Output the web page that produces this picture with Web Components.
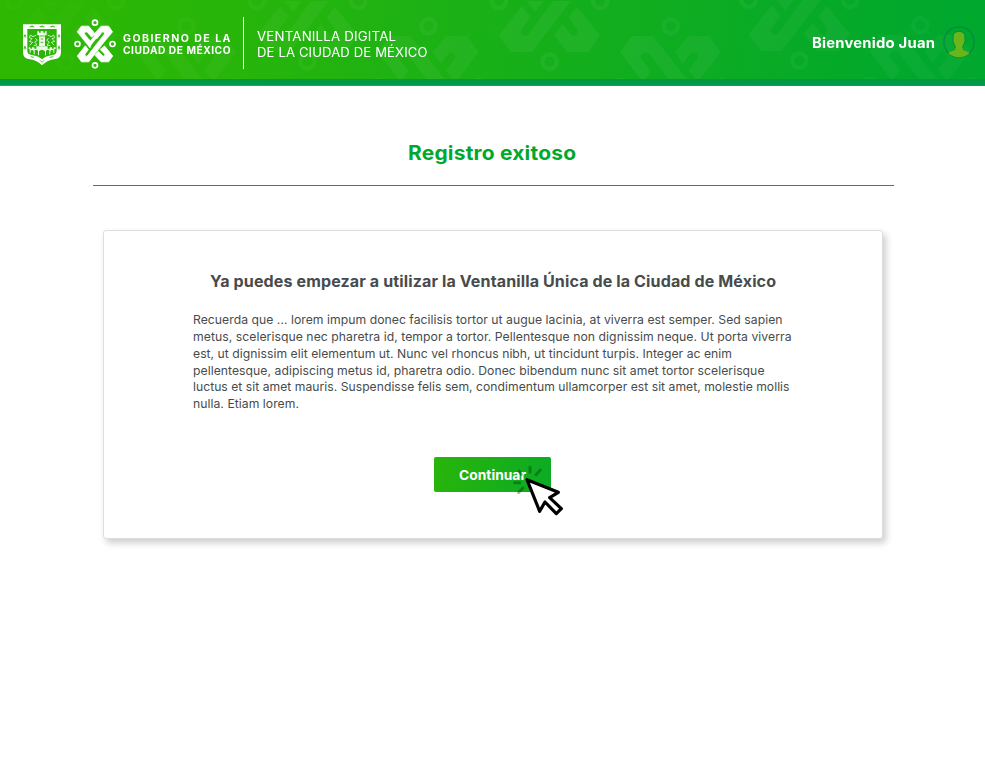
<!DOCTYPE html>
<html lang="es">
<head>
<meta charset="utf-8">
<title>Registro exitoso</title>
<style>
body{margin:0;background:#fff;font-family:Inter,"Open Sans",sans-serif;color:#484b4b}
</style>
</head>
<body>
<app-page></app-page>
<script>
const define = (name, html, ready) => customElements.define(name, class extends HTMLElement {
  connectedCallback() {
    if (this.shadowRoot) return;
    this.attachShadow({mode: 'open'}).innerHTML = html;
    if (ready) ready(this);
  }
});

/* Fills a width with one line: part tracking, part glyph widening. */
const fit = (span, target, n, share = .3) => {
  const natural = span.getBoundingClientRect().width;
  const spacing = (target - natural) * share / n;
  span.style.letterSpacing = spacing + 'px';
  span.style.transform = `scaleX(${target / (natural + spacing * (n - 1))})`;
};

define('fit-line', `<style>:host{display:block;white-space:nowrap}span{display:inline-block;transform-origin:0 50%}</style><span><slot></slot></span>`, el => {
  if (el.hasAttribute('later')) return;
  const w = +el.getAttribute('w');
  fit(el.shadowRoot.querySelector('span'), w, el.textContent.length, +(el.getAttribute('track') || .3));
  el.style.width = w + 'px';
});

define('header-pattern', `<style>:host{display:block;position:absolute;inset:0 0 7px 0;overflow:hidden}svg{display:block}</style>
<svg width="985" height="79" fill="#fff">
<defs>
<linearGradient id="fade"><stop offset="0" stop-color="#fff" stop-opacity=".35"/><stop offset=".35" stop-color="#fff" stop-opacity=".9"/><stop offset=".6" stop-color="#fff"/><stop offset="1" stop-color="#fff" stop-opacity=".75"/></linearGradient>
<mask id="m" maskUnits="userSpaceOnUse" x="0" y="0" width="985" height="79"><rect width="985" height="79" fill="url(#fade)"/></mask>
<circle id="ring" r="21.5" fill="none" stroke="#fff" stroke-width="13"/>
<g id="a">
<path d="M-152-104L-117-153H-54L52-20H-4L-62-96Q-76-112-88-98Q-94-90-88-84L-60-48L-80-20H-88Z"/>
<path d="M13-104L53-153H116L150-104L86-20H76L53-51L80-84Q84-96 75-102Q65-108 58-98L36-69Z"/>
<use href="#ring" y="-182"/><use href="#ring" x="-152"/><use href="#ring" x="152"/></g>
<g id="b">
<path d="M-152 103L-83 15L-57 47L-85 86Q-90 98-80 103Q-70 108-62 98L10 0H64L-53 153H-116Z"/>
<path d="M82 17L152 103L117 153H52L14 101L40 69L63 99Q72 108 81 101Q87 94 83 86L57 49Z"/>
<path d="M-68 0H-18L-43 32Z"/>
<use href="#ring" y="182"/><use href="#ring" x="-152"/><use href="#ring" x="152"/></g>
</defs>
<g mask="url(#m)"><g id="set" opacity=".052"></g></g>
</svg>`, el => {
  el.shadowRoot.querySelector('#set').innerHTML =
    [[186.3,87],[428.5,87],[670.7,87],[920.3,86]].map(([x,y]) => `<use href="#a" transform="translate(${x} ${y}) scale(.3333)"/>`).join('') +
    [[65.3,1],[307.5,1],[549.5,1],[799.3,0]].map(([x,y]) => `<use href="#b" transform="translate(${x} ${y}) scale(.3333)"/>`).join('');
});

define('city-shield', `<style>:host{display:block;width:38px;height:42px}svg{display:block}</style>
<svg width="38" height="42" viewBox="0 0 114 126">
<path fill="#fff" d="M0 1H114V84Q114 102 98 105Q72 108 57 124Q42 108 16 105Q0 102 0 84Z"/>
<path fill="#2cb508" d="M13 15H101V80Q101 91 88 93Q68 96 57 106Q46 96 27 93Q13 91 13 80Z"/>
<g fill="#fff" fill-opacity=".92"><path d="M43 22H48V26H53V21H61V26H66V22H71V34H66V66H48V34H43Z"/>
<path d="M17 70H22V74H27V70H34V74H40V67H74V74H80V70H87V74H92V70H98V75H94V86H91V79Q85 76 82 81V91H79V79Q73 74 69 81V94H66V82Q57 72 48 82V94H45V81Q41 74 35 79V91H32V81Q29 76 23 79V86H20V75H17Z"/></g>
<g fill="none" stroke="#fff" stroke-opacity=".85" stroke-width="2.6"><path d="M40 33L30 38L22 33L19 41L27 44L19 52L29 55L20 64M37 42L43 49L35 54L42 63L32 65M74 33L84 38L92 33L95 41L87 44L95 52L85 55L94 64M77 42L71 49L79 54L72 63L82 65"/></g>
<g stroke="#2cb508" stroke-width="2.5" fill="none"><path d="M49 36H65M53 45H61M53 55H61M20 8H33M22 10L27 5L32 10M50 8H64M52 10L57 5L62 10M82 8H95M84 10L89 5L94 10M6 31V41M3 38L6 33L9 38M6 65V77M3 74L6 68L9 74M108 31V41M105 38L108 33L111 38M108 65V77M105 74L108 68L111 74M23 98L33 100M80 100L91 98M51 109L57 115L63 109"/></g>
</svg>`);

define('city-emblem', `<style>:host{display:block;width:44px;height:50px}svg{display:block}</style>
<svg width="44" height="50" viewBox="0 0 132 150">
<g fill="none" stroke="#fff" stroke-width="5"><circle cx="66" cy="11" r="7.4"/><circle cx="66" cy="139" r="7.4"/><circle cx="13.5" cy="75" r="7.4"/><circle cx="118.5" cy="75" r="7.4"/></g>
<g fill="#fff" stroke="#fff" stroke-width="7" stroke-linejoin="round" transform="translate(66 75) scale(.35)">
<path d="M-152 103L-83 15L-57 47L-85 86Q-90 98-80 103Q-70 108-62 98L80-84Q84-96 75-102Q65-108 58-98L15-45L-14-78L53-153H116L150-104L64 0L-53 153H-116Z"/>
<path d="M-152-104L-117-153H-54L0-88L-28-58L-62-96Q-76-112-88-98Q-94-90-88-84L-60-48L-28-14L-43 32Z"/>
<path d="M-22-48L-6-68L10-48L-45 20L-60 2Z"/>
<path d="M82 17L152 103L117 153H52L0 97L26 62L63 99Q72 108 81 101Q87 94 83 86L44 47Z"/>
</g></svg>`);

define('user-avatar', `<style>:host{display:block;width:32px;height:32px}svg{display:block}</style>
<svg width="32" height="32" viewBox="0 0 96 96"><circle cx="48" cy="48" r="45.5" fill="none" stroke="#038a42" stroke-width="4"/>
<path fill="#6ab51a" d="M16 81C24 75 34 76 37 70V60Q33 54 31 46V26Q36 17 48 17Q60 17 65 26V46Q63 54 59 60V70C62 76 72 75 80 81Q66 94 48 94Q30 94 16 81Z"/>
<path fill="none" stroke="#078f3c" stroke-width="3" d="M36 66V60Q32 55 31 48Q28 44 30 39Q27 16 48 16Q69 16 66 39Q68 44 65 48Q64 55 60 60V66"/></svg>`);

define('site-header', `<style>
:host{display:flex;box-sizing:border-box;height:86px;position:relative;color:#fff;background:linear-gradient(98deg,#2eb800 0,#27b50b 25%,#0dac22 70%,#00a82d 95%)}
.bar{position:absolute;left:0;right:0;top:79px;height:6px;background:#009a46}
.row{display:flex;flex:1;position:relative;align-items:flex-start;padding-left:23px}
city-shield{margin-top:24px}city-emblem{margin:19px 0 0 11.6px}
.gov{margin:32.5px 0 0 6.4px;font:700 9.8px/12px Inter,sans-serif;width:108px}
.sep{width:1px;height:52px;margin:17px 13px 0 12px;background:#fff}
.name{font:400 12.6px/16px Inter,sans-serif;margin-top:29.4px}
.user{margin:33px 8px 0 auto;font:700 14px/20px Inter,sans-serif}
user-avatar{margin:26px 10px 0 0}
</style><header-pattern></header-pattern><div class="bar"></div>
<div class="row"><city-shield></city-shield><city-emblem></city-emblem>
<div class="gov"><fit-line w="107.5" track=".75">GOBIERNO DE LA</fit-line><fit-line w="107.5" track=".7">CIUDAD DE MÉXICO</fit-line></div>
<div class="sep"></div>
<div class="name"><fit-line w="139">VENTANILLA DIGITAL</fit-line><fit-line w="170.5">DE LA CIUDAD DE MÉXICO</fit-line></div>
<div class="user"><fit-line w="123">Bienvenido Juan</fit-line></div><user-avatar></user-avatar></div>`);

define('page-title', `<style>:host{display:flex;justify-content:center;box-sizing:border-box;width:801px;height:47px;margin:53px 0 0 92.5px;padding-right:2px;border-bottom:1px solid #00a82d;color:#00a82d;font:700 20px/28px Inter,sans-serif}</style><fit-line w="168">Registro exitoso</fit-line>`);

define('click-cursor', `<style>:host{display:block;position:absolute;left:78px;top:7px;width:54px;height:54px;pointer-events:none}svg{display:block}</style>
<svg width="54" height="54" viewBox="276 57 162 162">
<g stroke="#003b10" stroke-opacity=".4" stroke-width="9" stroke-linecap="round"><path d="M330 67V82M361 75L348 89M297 78L304 88M284 113H300M296 142L309 129"/></g>
<path fill="#fff" stroke="#000" stroke-width="9.5" stroke-linejoin="round" d="M321 104L415 142L389 158L424 191L409 206L375 171L359 199Z"/></svg>`);

define('primary-button', `<style>:host{display:block;position:relative;width:117px;height:35px}
button{display:flex;justify-content:center;width:117px;height:35px;padding:9px 0 0;box-sizing:border-box;border:0;border-radius:2px;color:#fff;background:linear-gradient(105deg,#29b50a,#0aab25);font:700 13.7px/19px Inter,sans-serif}
fit-line{width:67px}</style>
<button><fit-line later><slot></slot></fit-line></button><click-cursor></click-cursor>`, el => {
  fit(el.shadowRoot.querySelector('fit-line').shadowRoot.querySelector('span'), 67, el.textContent.length);
});

define('success-card', `<style>
:host{display:flex;flex-direction:column;align-items:center;box-sizing:border-box;width:780px;height:309px;margin:44px 0 0 103px;padding:41px 1px 0 0;border:1px solid #dcdfe0;border-radius:3px;background:#fff;box-shadow:3px 4px 7px rgba(0,0,0,.2)}
h2{margin:0;font:700 15.5px/20px Inter,sans-serif}
.copy{align-self:flex-start;margin:20.2px 0 0 89px;font:400 12px/16.8px Inter,sans-serif}
primary-button{margin-top:44px}
</style><h2><fit-line w="566">Ya puedes empezar a utilizar la Ventanilla Única de la Ciudad de México</fit-line></h2>
<div class="copy">
<fit-line w="589.5">Recuerda que ... lorem impum donec facilisis tortor ut augue lacinia, at viverra est semper. Sed sapien</fit-line>
<fit-line w="598.5">metus, scelerisque nec pharetra id, tempor a tortor. Pellentesque non dignissim neque. Ut porta viverra</fit-line>
<fit-line w="539">est, ut dignissim elit elementum ut. Nunc vel rhoncus nibh, ut tincidunt turpis. Integer ac enim</fit-line>
<fit-line w="571.5">pellentesque, adipiscing metus id, pharetra odio. Donec bibendum nunc sit amet tortor scelerisque</fit-line>
<fit-line w="596.5">luctus et sit amet mauris. Suspendisse felis sem, condimentum ullamcorper est sit amet, molestie mollis</fit-line>
<fit-line w="106">nulla. Etiam lorem.</fit-line></div>
<primary-button>Continuar</primary-button>`);

define('app-page', `<style>:host{display:block;width:985px;height:768px;overflow:hidden}</style><site-header></site-header><page-title></page-title><success-card></success-card>`);
</script>
</body>
</html>
